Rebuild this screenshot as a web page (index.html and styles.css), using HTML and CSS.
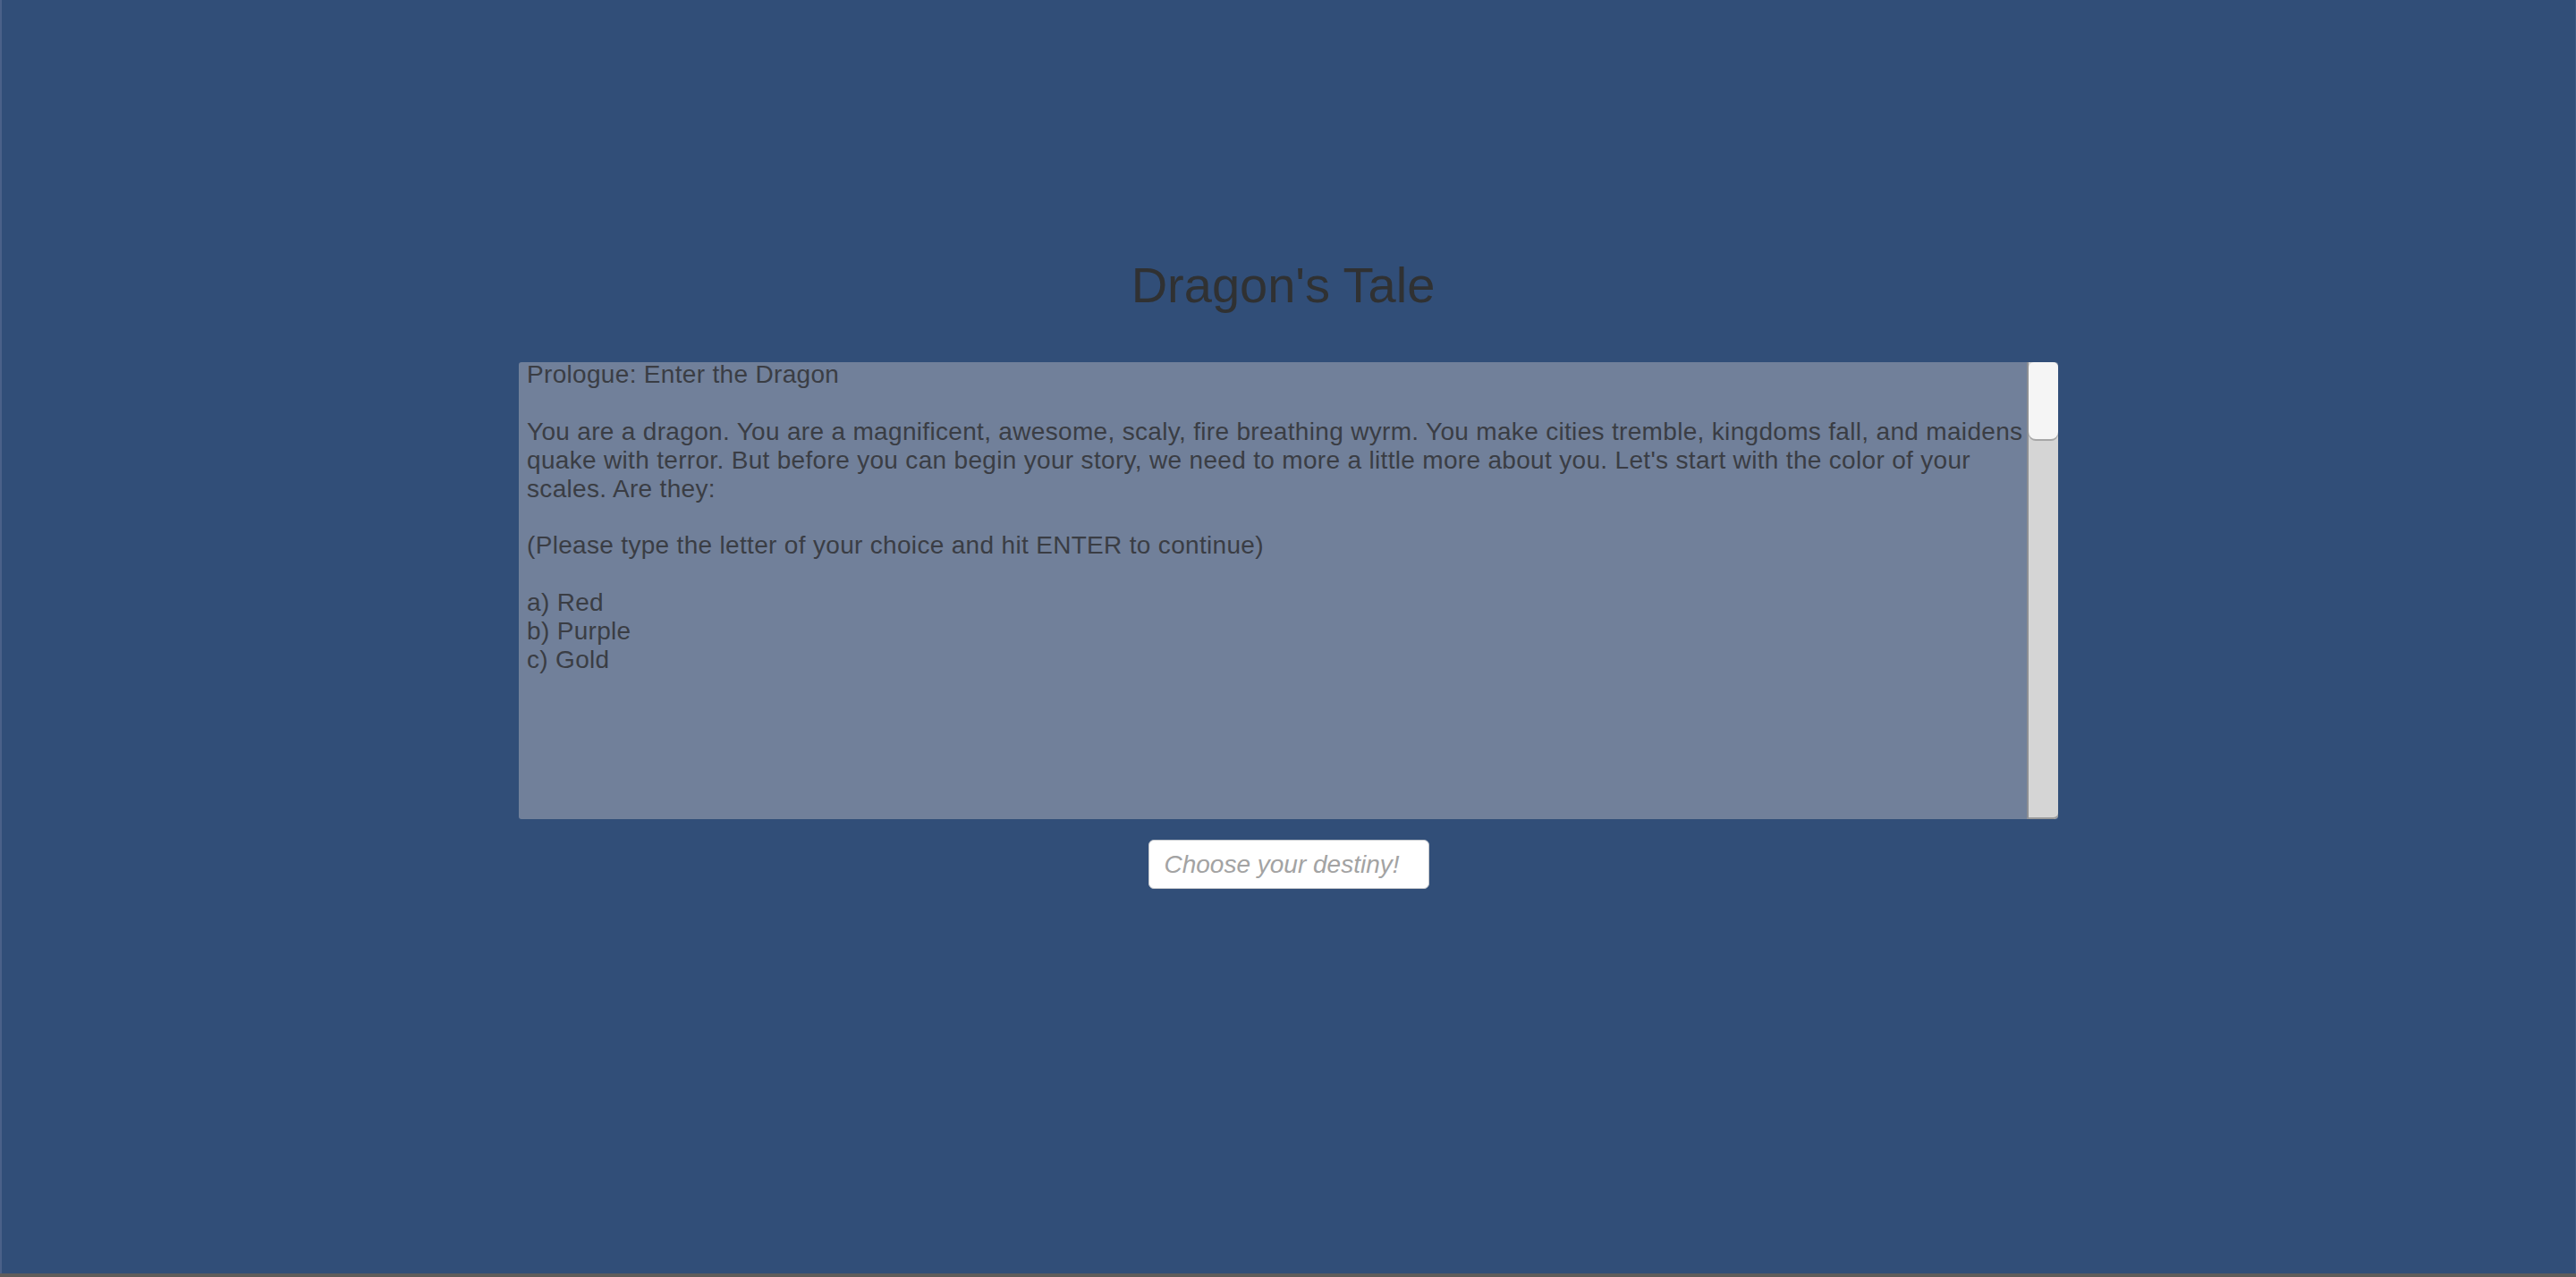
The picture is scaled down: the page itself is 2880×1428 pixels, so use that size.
FILE: index.html
```html
<!DOCTYPE html>
<html lang="en">
<head>
<meta charset="utf-8">
<title>Dragon's Tale</title>
<link rel="stylesheet" href="styles.css">
</head>
<body>
<main class="screen">
  <h1 class="title">Dragon's Tale</h1>
  <section class="story">
    <div class="story-text"><p class="line">Prologue: Enter the Dragon</p><p class="line">&nbsp;</p><p class="line">You are a dragon. You are a magnificent, awesome, scaly, fire breathing wyrm. You make cities tremble, kingdoms fall, and maidens</p><p class="line">quake with terror. But before you can begin your story, we need to more a little more about you. Let's start with the color of your</p><p class="line">scales. Are they:</p><p class="line">&nbsp;</p><p class="line">(Please type the letter of your choice and hit ENTER to continue)</p><p class="line">&nbsp;</p><p class="line">a) Red</p><p class="line">b) Purple</p><p class="line">c) Gold</p></div>
    <div class="scrollbar"><div class="thumb"></div></div>
  </section>
  <input class="answer" type="text" placeholder="Choose your destiny!">
</main>
</body>
</html>
```

FILE: styles.css
```css
html, body {
  margin: 0;
  padding: 0;
  background: #5e5c5b;
}
.screen {
  box-sizing: border-box;
  height: 1424px;
  width: 2880px;
  background: #314e78;
  border-left: 2px solid #4a6189;
  border-right: 1px solid #3f5a84;
  display: flex;
  flex-direction: column;
  align-items: center;
  padding-top: 287px;
  font-family: "Liberation Sans", Arial, sans-serif;
}
.title {
  margin: 0 0 54px -12px;
  font-size: 56px;
  line-height: 64px;
  font-weight: normal;
  color: #303132;
}
.story {
  width: 1721px;
  height: 511px;
  background: #71809a;
  border-radius: 3px;
  display: flex;
}
.story-text {
  flex: 1;
  padding: 0 0 0 9px;
  margin-top: -2px;
  color: #3a3d44;
  font-size: 28px;
  letter-spacing: 0.32px;
  line-height: 31.9px;
  white-space: nowrap;
  overflow: hidden;
}
.line {
  margin: 0;
}
.scrollbar {
  width: 33px;
  background: #d5d5d5;
  border-left: 2px solid #8d8f94;
  border-radius: 0 5px 5px 0;
  box-shadow: inset 0 -2px 0 #9a9a9a;
}
.thumb {
  height: 86px;
  background: #f5f5f5;
  border-radius: 6px 6px 8px 8px;
  box-shadow: 0 2px 0 #a7a7a7;
}
.answer {
  box-sizing: border-box;
  margin-top: 23px;
  width: 314px;
  height: 55px;
  background: #ffffff;
  border: 1px solid #c4c7cc;
  border-radius: 6px;
  padding: 0 0 0 17px;
  font-family: "Liberation Sans", Arial, sans-serif;
  font-size: 28px;
  font-style: italic;
  color: #333;
  outline: none;
}
.answer::placeholder {
  color: #a3a3a3;
  font-style: italic;
}
```
